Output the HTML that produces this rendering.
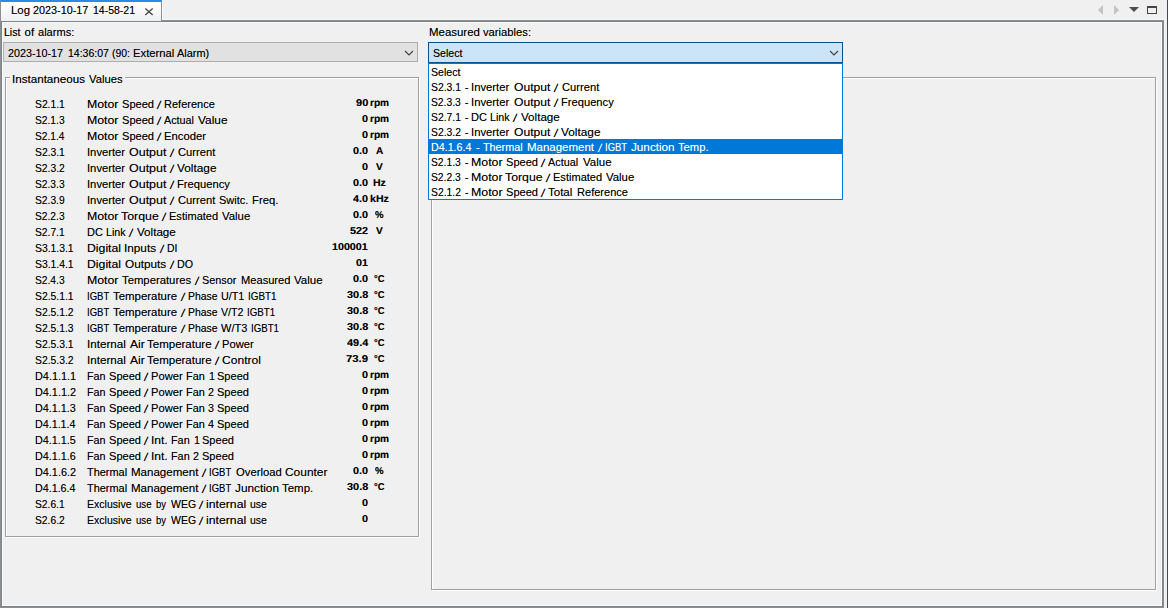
<!DOCTYPE html>
<html lang="en">
<head>
<meta charset="utf-8">
<title>Log 2023-10-17 14-58-21</title>
<style>
html,body{margin:0;padding:0}
body{width:1168px;height:608px;background:#f0f0f0;position:relative;overflow:hidden;font-family:"Liberation Sans",sans-serif;font-size:11.5px;color:#000}
div,span,svg{position:absolute;box-sizing:border-box}
.t{text-shadow:0 0 0 rgba(0,0,0,.45);white-space:nowrap;line-height:16px;height:16px;transform-origin:0 0;font-size:11.5px}
.b{font-weight:bold;font-size:10px;text-rendering:geometricPrecision}
.sl{text-shadow:0 0 0 rgba(0,0,0,.8)}
.w{color:#fff;text-shadow:0 0 0 rgba(255,255,255,.45)}
#edge{left:1167px;top:0;width:1px;height:608px;background:#454a52}
#frame{left:0;top:20px;width:1164px;height:588px;box-shadow:inset 0 0 0 1px #8e8e8e,inset 0 0 0 2px #7d838c,inset 0 0 0 3px #fbfbfb}
#tab{left:0;top:0;width:162px;height:21px;background:linear-gradient(#ffffff,#fafafa 40%,#f0f0f0);border-left:1px solid #8e8e8e;border-right:1px solid #8e8e8e;border-top:2px solid #2b8ae2}
#tabhl{left:162px;top:2px;width:1px;height:18px;background:#fafafa}
#tabhl2{left:162px;top:19px;width:1002px;height:1px;background:#f8f8f8}
#cb1{left:3px;top:42px;width:415px;height:20px;background:#e1e1e1;border:1px solid #adadad}
#cb2{left:428px;top:42px;width:415px;height:21px;background:#cce4f7;border:1px solid #005499}
#dd{left:428px;top:63px;width:415px;height:137px;background:#fff;border:1px solid #0078d7}
#sel{left:429px;top:139px;width:413px;height:15px;background:#0078d7}
.grp{left:0;top:0;width:0;height:0}
.gg{border:1px solid #a0a0a0}
.gw{border:1px solid #fff}
#gbt{left:10px;top:70px;width:115px;height:16px;background:#f0f0f0}
</style>
</head>
<body>
<div id="edge"></div>
<div id="frame"></div>
<div id="tabhl2"></div>
<div id="tab"></div>
<div id="tabhl"></div>
<svg style="left:140px;top:4px" width="18" height="16" viewBox="0 0 18 16"><path d="M5.3 4.4 L12.7 10.9 M12.7 4.4 L5.3 10.9" stroke="#444" stroke-width="1.3" fill="none"/></svg>
<svg style="left:1090px;top:0" width="74" height="20" viewBox="0 0 74 20">
<path d="M8 10 L13 5 L13 15 Z" fill="#c3c3c3"/>
<path d="M24 5 L29 10 L24 15 Z" fill="#c3c3c3"/>
<path d="M39 7 L49 7 L44 12 Z" fill="#4d4d4d"/>
<path d="M57 6 H67 V14 H57 Z M58 8 V13 H66 V8 Z" fill="#454545" fill-rule="evenodd"/>
</svg>
<div id="cb1"></div>
<svg style="left:403px;top:48px" width="12" height="10" viewBox="0 0 12 10"><path d="M2 3 L6 7 L10 3" stroke="#404040" stroke-width="1.1" fill="none"/></svg>
<div class="gw" style="left:6px;top:78px;width:414px;height:460px"></div>
<div class="gg" style="left:5px;top:77px;width:414px;height:460px"></div>
<div id="gbt"></div>
<div class="gw" style="left:432px;top:78px;width:725px;height:513px"></div>
<div class="gg" style="left:431px;top:77px;width:725px;height:513px"></div>
<div id="cb2"></div>
<svg style="left:828px;top:48px" width="12" height="10" viewBox="0 0 12 10"><path d="M2 3 L6 7 L10 3" stroke="#404040" stroke-width="1.1" fill="none"/></svg>
<div id="dd"></div>
<div id="sel"></div>
<div class="grp" id="tabtitle">
<span class="t" style="left:11.26px;top:2.0px;transform:scaleX(0.9903)">Log</span> <span class="t" style="left:33.40px;top:2.0px;transform:scaleX(0.9396)">2023-10-17</span> <span class="t" style="left:93.30px;top:2.0px;transform:scaleX(0.9137)">14-58-21</span>
</div>
<div class="grp" id="lbl-alarms">
<span class="t" style="left:4.04px;top:24.0px;transform:scaleX(0.9169)">List</span> <span class="t" style="left:24.52px;top:24.0px;transform:scaleX(1.0000)">of</span> <span class="t" style="left:37.50px;top:24.0px;transform:scaleX(0.9612)">alarms:</span>
</div>
<div class="grp" id="lbl-vars">
<span class="t" style="left:429.45px;top:24.0px;transform:scaleX(0.9946)">Measured</span> <span class="t" style="left:483.27px;top:24.0px;transform:scaleX(0.9760)">variables:</span>
</div>
<div class="grp" id="cb1-text">
<span class="t" style="left:8.24px;top:45.0px;transform:scaleX(0.9353)">2023-10-17</span> <span class="t" style="left:68.23px;top:45.0px;transform:scaleX(0.9128)">14:36:07</span> <span class="t" style="left:111.93px;top:45.0px;transform:scaleX(0.9026)">(90:</span> <span class="t" style="left:133.34px;top:45.0px;transform:scaleX(0.9806)">External</span> <span class="t" style="left:177.04px;top:45.0px;transform:scaleX(0.9483)">Alarm)</span>
</div>
<div class="grp" id="cb2-text">
<span class="t" style="left:433.14px;top:45.0px;transform:scaleX(0.9228)">Select</span>
</div>
<div class="grp" id="legend">
<span class="t" style="left:11.79px;top:71.0px;transform:scaleX(1.0098)">Instantaneous</span> <span class="t" style="left:89.18px;top:71.0px;transform:scaleX(0.9767)">Values</span>
</div>
<div class="grp" id="options">
<div class="grp opt">
<span class="t" style="left:431.34px;top:64.0px;transform:scaleX(0.9230)">Select</span>
</div>
<div class="grp opt">
<span class="t" style="left:431.13px;top:79.0px;transform:scaleX(0.9003)">S2.3.1</span> <span class="t" style="left:464.68px;top:79.0px;transform:scaleX(1.0000)">-</span> <span class="t" style="left:470.98px;top:79.0px;transform:scaleX(0.9782)">Inverter</span> <span class="t" style="left:513.88px;top:79.0px;transform:scaleX(1.0533)">Output</span> <span class="t sl" style="left:553.85px;top:79.6px;transform-origin:0 11px;transform:skewX(-9.5deg)">/</span> <span class="t" style="left:562.04px;top:79.0px;transform:scaleX(0.9732)">Current</span>
</div>
<div class="grp opt">
<span class="t" style="left:431.22px;top:94.0px;transform:scaleX(0.8951)">S2.3.3</span> <span class="t" style="left:464.68px;top:94.0px;transform:scaleX(1.0000)">-</span> <span class="t" style="left:470.98px;top:94.0px;transform:scaleX(0.9782)">Inverter</span> <span class="t" style="left:513.88px;top:94.0px;transform:scaleX(1.0533)">Output</span> <span class="t sl" style="left:553.85px;top:94.6px;transform-origin:0 11px;transform:skewX(-9.5deg)">/</span> <span class="t" style="left:561.32px;top:94.0px;transform:scaleX(0.9700)">Frequency</span>
</div>
<div class="grp opt">
<span class="t" style="left:431.14px;top:109.0px;transform:scaleX(0.8989)">S2.7.1</span> <span class="t" style="left:464.68px;top:109.0px;transform:scaleX(1.0000)">-</span> <span class="t" style="left:471.43px;top:109.0px;transform:scaleX(0.9598)">DC</span> <span class="t" style="left:490.35px;top:109.0px;transform:scaleX(0.9302)">Link</span> <span class="t sl" style="left:513.30px;top:109.6px;transform-origin:0 11px;transform:skewX(-9.5deg)">/</span> <span class="t" style="left:520.83px;top:109.0px;transform:scaleX(1.0111)">Voltage</span>
</div>
<div class="grp opt">
<span class="t" style="left:431.14px;top:124.0px;transform:scaleX(0.9005)">S2.3.2</span> <span class="t" style="left:464.68px;top:124.0px;transform:scaleX(1.0000)">-</span> <span class="t" style="left:470.98px;top:124.0px;transform:scaleX(0.9782)">Inverter</span> <span class="t" style="left:513.88px;top:124.0px;transform:scaleX(1.0533)">Output</span> <span class="t sl" style="left:553.85px;top:124.6px;transform-origin:0 11px;transform:skewX(-9.5deg)">/</span> <span class="t" style="left:561.40px;top:124.0px;transform:scaleX(1.0297)">Voltage</span>
</div>
<div class="grp opt">
<span class="t w" style="left:431.29px;top:139.0px;transform:scaleX(0.9297)">D4.1.6.4</span> <span class="t w" style="left:476.07px;top:139.0px;transform:scaleX(1.0000)">-</span> <span class="t w" style="left:482.66px;top:139.0px;transform:scaleX(0.9381)">Thermal</span> <span class="t w" style="left:526.86px;top:139.0px;transform:scaleX(0.9988)">Management</span> <span class="t sl w" style="left:597.95px;top:139.6px;transform-origin:0 11px;transform:skewX(-9.5deg)">/</span> <span class="t w" style="left:604.84px;top:139.0px;transform:scaleX(0.8244)">IGBT</span> <span class="t w" style="left:630.89px;top:139.0px;transform:scaleX(1.0180)">Junction</span> <span class="t w" style="left:677.70px;top:139.0px;transform:scaleX(0.9736)">Temp.</span>
</div>
<div class="grp opt">
<span class="t" style="left:431.22px;top:154.0px;transform:scaleX(0.8946)">S2.1.3</span> <span class="t" style="left:464.68px;top:154.0px;transform:scaleX(1.0000)">-</span> <span class="t" style="left:471.45px;top:154.0px;transform:scaleX(1.0751)">Motor</span> <span class="t" style="left:506.32px;top:154.0px;transform:scaleX(0.9626)">Speed</span> <span class="t sl" style="left:541.15px;top:154.6px;transform-origin:0 11px;transform:skewX(-9.5deg)">/</span> <span class="t" style="left:548.37px;top:154.0px;transform:scaleX(0.9425)">Actual</span> <span class="t" style="left:583.27px;top:154.0px;transform:scaleX(0.9999)">Value</span>
</div>
<div class="grp opt">
<span class="t" style="left:431.22px;top:169.0px;transform:scaleX(0.8946)">S2.2.3</span> <span class="t" style="left:464.68px;top:169.0px;transform:scaleX(1.0000)">-</span> <span class="t" style="left:471.45px;top:169.0px;transform:scaleX(1.0751)">Motor</span> <span class="t" style="left:505.40px;top:169.0px;transform:scaleX(1.0700)">Torque</span> <span class="t sl" style="left:546.30px;top:169.6px;transform-origin:0 11px;transform:skewX(-9.5deg)">/</span> <span class="t" style="left:553.29px;top:169.0px;transform:scaleX(0.9611)">Estimated</span> <span class="t" style="left:606.44px;top:169.0px;transform:scaleX(0.9902)">Value</span>
</div>
<div class="grp opt">
<span class="t" style="left:431.15px;top:184.0px;transform:scaleX(0.8994)">S2.1.2</span> <span class="t" style="left:464.68px;top:184.0px;transform:scaleX(1.0000)">-</span> <span class="t" style="left:471.45px;top:184.0px;transform:scaleX(1.0751)">Motor</span> <span class="t" style="left:506.32px;top:184.0px;transform:scaleX(0.9626)">Speed</span> <span class="t sl" style="left:541.15px;top:184.6px;transform-origin:0 11px;transform:skewX(-9.5deg)">/</span> <span class="t" style="left:547.78px;top:184.0px;transform:scaleX(1.0021)">Total</span> <span class="t" style="left:577.09px;top:184.0px;transform:scaleX(0.9611)">Reference</span>
</div>
</div>
<div class="grp" id="values">
<div class="grp row">
<div class="grp code"><span class="t" style="left:35.03px;top:96.0px;transform:scaleX(0.8973)">S2.1.1</span></div>
<div class="grp name"><span class="t" style="left:86.59px;top:96.0px;transform:scaleX(1.0705)">Motor</span> <span class="t" style="left:122.10px;top:96.0px;transform:scaleX(0.9626)">Speed</span> <span class="t sl" style="left:157.05px;top:96.6px;transform-origin:0 11px;transform:skewX(-9.5deg)">/</span> <span class="t" style="left:164.14px;top:96.0px;transform:scaleX(0.9575)">Reference</span></div>
<div class="grp val"><span class="t b" style="left:356.10px;top:95.5px;transform:scaleX(1.1037)">90</span></div>
<div class="grp unit"><span class="t b" style="left:369.88px;top:95.5px;transform:scaleX(1.0097)">rpm</span></div>
</div>
<div class="grp row">
<div class="grp code"><span class="t" style="left:35.02px;top:112.0px;transform:scaleX(0.8897)">S2.1.3</span></div>
<div class="grp name"><span class="t" style="left:86.59px;top:112.0px;transform:scaleX(1.0705)">Motor</span> <span class="t" style="left:122.10px;top:112.0px;transform:scaleX(0.9626)">Speed</span> <span class="t sl" style="left:157.05px;top:112.6px;transform-origin:0 11px;transform:skewX(-9.5deg)">/</span> <span class="t" style="left:164.10px;top:112.0px;transform:scaleX(0.9393)">Actual</span> <span class="t" style="left:198.40px;top:112.0px;transform:scaleX(1.0333)">Value</span></div>
<div class="grp val"><span class="t b" style="left:362.38px;top:111.5px;transform:scaleX(1.0777)">0</span></div>
<div class="grp unit"><span class="t b" style="left:369.88px;top:111.5px;transform:scaleX(1.0097)">rpm</span></div>
</div>
<div class="grp row">
<div class="grp code"><span class="t" style="left:35.29px;top:128.0px;transform:scaleX(0.8856)">S2.1.4</span></div>
<div class="grp name"><span class="t" style="left:86.59px;top:128.0px;transform:scaleX(1.0705)">Motor</span> <span class="t" style="left:122.10px;top:128.0px;transform:scaleX(0.9626)">Speed</span> <span class="t sl" style="left:157.05px;top:128.6px;transform-origin:0 11px;transform:skewX(-9.5deg)">/</span> <span class="t" style="left:164.21px;top:128.0px;transform:scaleX(0.9781)">Encoder</span></div>
<div class="grp val"><span class="t b" style="left:362.38px;top:127.5px;transform:scaleX(1.0777)">0</span></div>
<div class="grp unit"><span class="t b" style="left:369.88px;top:127.5px;transform:scaleX(1.0097)">rpm</span></div>
</div>
<div class="grp row">
<div class="grp code"><span class="t" style="left:35.03px;top:144.0px;transform:scaleX(0.8981)">S2.3.1</span></div>
<div class="grp name"><span class="t" style="left:86.82px;top:144.0px;transform:scaleX(0.9775)">Inverter</span> <span class="t" style="left:128.72px;top:144.0px;transform:scaleX(1.0849)">Output</span> <span class="t sl" style="left:170.45px;top:144.6px;transform-origin:0 11px;transform:skewX(-9.5deg)">/</span> <span class="t" style="left:177.88px;top:144.0px;transform:scaleX(0.9732)">Current</span></div>
<div class="grp val"><span class="t b" style="left:353.38px;top:143.5px;transform:scaleX(1.0778)">0.0</span></div>
<div class="grp unit"><span class="t b" style="left:375.97px;top:143.5px;transform:scaleX(1.0065)">A</span></div>
</div>
<div class="grp row">
<div class="grp code"><span class="t" style="left:35.06px;top:160.0px;transform:scaleX(0.8946)">S2.3.2</span></div>
<div class="grp name"><span class="t" style="left:86.82px;top:160.0px;transform:scaleX(0.9775)">Inverter</span> <span class="t" style="left:128.72px;top:160.0px;transform:scaleX(1.0849)">Output</span> <span class="t sl" style="left:170.45px;top:160.6px;transform-origin:0 11px;transform:skewX(-9.5deg)">/</span> <span class="t" style="left:177.30px;top:160.0px;transform:scaleX(1.0297)">Voltage</span></div>
<div class="grp val"><span class="t b" style="left:362.38px;top:159.5px;transform:scaleX(1.0777)">0</span></div>
<div class="grp unit"><span class="t b" style="left:376.38px;top:159.5px;transform:scaleX(1.0086)">V</span></div>
</div>
<div class="grp row">
<div class="grp code"><span class="t" style="left:35.02px;top:176.0px;transform:scaleX(0.8901)">S2.3.3</span></div>
<div class="grp name"><span class="t" style="left:86.82px;top:176.0px;transform:scaleX(0.9775)">Inverter</span> <span class="t" style="left:128.72px;top:176.0px;transform:scaleX(1.0849)">Output</span> <span class="t sl" style="left:170.45px;top:176.6px;transform-origin:0 11px;transform:skewX(-9.5deg)">/</span> <span class="t" style="left:177.24px;top:176.0px;transform:scaleX(0.9724)">Frequency</span></div>
<div class="grp val"><span class="t b" style="left:353.38px;top:175.5px;transform:scaleX(1.0778)">0.0</span></div>
<div class="grp unit"><span class="t b" style="left:373.34px;top:175.5px;transform:scaleX(1.0547)">Hz</span></div>
</div>
<div class="grp row">
<div class="grp code"><span class="t" style="left:35.04px;top:192.0px;transform:scaleX(0.8914)">S2.3.9</span></div>
<div class="grp name"><span class="t" style="left:86.82px;top:192.0px;transform:scaleX(0.9775)">Inverter</span> <span class="t" style="left:128.72px;top:192.0px;transform:scaleX(1.0849)">Output</span> <span class="t sl" style="left:170.45px;top:192.6px;transform-origin:0 11px;transform:skewX(-9.5deg)">/</span> <span class="t" style="left:177.88px;top:192.0px;transform:scaleX(0.9732)">Current</span> <span class="t" style="left:219.07px;top:192.0px;transform:scaleX(0.9577)">Switc.</span> <span class="t" style="left:252.07px;top:192.0px;transform:scaleX(0.9796)">Freq.</span></div>
<div class="grp val"><span class="t b" style="left:353.38px;top:191.5px;transform:scaleX(1.0778)">4.0</span></div>
<div class="grp unit"><span class="t b" style="left:370.07px;top:191.5px;transform:scaleX(1.0607)">kHz</span></div>
</div>
<div class="grp row">
<div class="grp code"><span class="t" style="left:35.02px;top:208.0px;transform:scaleX(0.8897)">S2.2.3</span></div>
<div class="grp name"><span class="t" style="left:86.59px;top:208.0px;transform:scaleX(1.0705)">Motor</span> <span class="t" style="left:121.30px;top:208.0px;transform:scaleX(1.0735)">Torque</span> <span class="t sl" style="left:162.20px;top:208.6px;transform-origin:0 11px;transform:skewX(-9.5deg)">/</span> <span class="t" style="left:169.02px;top:208.0px;transform:scaleX(0.9610)">Estimated</span> <span class="t" style="left:222.46px;top:208.0px;transform:scaleX(0.9901)">Value</span></div>
<div class="grp val"><span class="t b" style="left:353.38px;top:207.5px;transform:scaleX(1.0778)">0.0</span></div>
<div class="grp unit"><span class="t b" style="left:375.08px;top:207.5px;transform:scaleX(0.9616)">%</span></div>
</div>
<div class="grp row">
<div class="grp code"><span class="t" style="left:35.06px;top:224.0px;transform:scaleX(0.8917)">S2.7.1</span></div>
<div class="grp name"><span class="t" style="left:87.49px;top:224.0px;transform:scaleX(0.9567)">DC</span> <span class="t" style="left:106.19px;top:224.0px;transform:scaleX(0.9302)">Link</span> <span class="t sl" style="left:129.20px;top:224.6px;transform-origin:0 11px;transform:skewX(-9.5deg)">/</span> <span class="t" style="left:136.55px;top:224.0px;transform:scaleX(1.0110)">Voltage</span></div>
<div class="grp val"><span class="t b" style="left:350.40px;top:223.5px;transform:scaleX(1.0805)">522</span></div>
<div class="grp unit"><span class="t b" style="left:376.38px;top:223.5px;transform:scaleX(1.0086)">V</span></div>
</div>
<div class="grp row">
<div class="grp code"><span class="t" style="left:35.06px;top:240.0px;transform:scaleX(0.9019)">S3.1.3.1</span></div>
<div class="grp name"><span class="t" style="left:87.19px;top:240.0px;transform:scaleX(1.0653)">Digital</span> <span class="t" style="left:123.68px;top:240.0px;transform:scaleX(1.0236)">Inputs</span> <span class="t sl" style="left:160.20px;top:240.6px;transform-origin:0 11px;transform:skewX(-9.5deg)">/</span> <span class="t" style="left:167.38px;top:240.0px;transform:scaleX(0.9056)">DI</span></div>
<div class="grp val"><span class="t b" style="left:332.43px;top:239.5px;transform:scaleX(1.0701)">100001</span></div>
</div>
<div class="grp row">
<div class="grp code"><span class="t" style="left:34.95px;top:256.0px;transform:scaleX(0.9019)">S3.1.4.1</span></div>
<div class="grp name"><span class="t" style="left:87.19px;top:256.0px;transform:scaleX(1.0653)">Digital</span> <span class="t" style="left:124.60px;top:256.0px;transform:scaleX(1.0241)">Outputs</span> <span class="t sl" style="left:170.35px;top:256.6px;transform-origin:0 11px;transform:skewX(-9.5deg)">/</span> <span class="t" style="left:177.42px;top:256.0px;transform:scaleX(0.9315)">DO</span></div>
<div class="grp val"><span class="t b" style="left:356.33px;top:255.5px;transform:scaleX(1.0693)">01</span></div>
</div>
<div class="grp row">
<div class="grp code"><span class="t" style="left:35.01px;top:272.0px;transform:scaleX(0.8906)">S2.4.3</span></div>
<div class="grp name"><span class="t" style="left:86.59px;top:272.0px;transform:scaleX(1.0705)">Motor</span> <span class="t" style="left:122.19px;top:272.0px;transform:scaleX(0.9825)">Temperatures</span> <span class="t sl" style="left:195.20px;top:272.6px;transform-origin:0 11px;transform:skewX(-9.5deg)">/</span> <span class="t" style="left:202.28px;top:272.0px;transform:scaleX(0.9415)">Sensor</span> <span class="t" style="left:241.17px;top:272.0px;transform:scaleX(0.9668)">Measured</span> <span class="t" style="left:294.30px;top:272.0px;transform:scaleX(1.0013)">Value</span></div>
<div class="grp val"><span class="t b" style="left:353.38px;top:271.5px;transform:scaleX(1.0778)">0.0</span></div>
<div class="grp unit"><span class="t b" style="left:373.70px;top:271.5px;transform:scaleX(0.9364)">°C</span></div>
</div>
<div class="grp row">
<div class="grp code"><span class="t" style="left:35.06px;top:288.0px;transform:scaleX(0.9017)">S2.5.1.1</span></div>
<div class="grp name"><span class="t" style="left:87.07px;top:288.0px;transform:scaleX(0.8291)">IGBT</span> <span class="t" style="left:113.30px;top:288.0px;transform:scaleX(0.9928)">Temperature</span> <span class="t sl" style="left:180.90px;top:288.6px;transform-origin:0 11px;transform:skewX(-9.5deg)">/</span> <span class="t" style="left:188.08px;top:288.0px;transform:scaleX(0.9043)">Phase</span> <span class="t" style="left:221.48px;top:288.0px;transform:scaleX(0.9370)">U/T1</span> <span class="t" style="left:247.74px;top:288.0px;transform:scaleX(0.8607)">IGBT1</span></div>
<div class="grp val"><span class="t b" style="left:347.09px;top:287.5px;transform:scaleX(1.0918)">30.8</span></div>
<div class="grp unit"><span class="t b" style="left:373.70px;top:287.5px;transform:scaleX(0.9364)">°C</span></div>
</div>
<div class="grp row">
<div class="grp code"><span class="t" style="left:35.12px;top:304.0px;transform:scaleX(0.9003)">S2.5.1.2</span></div>
<div class="grp name"><span class="t" style="left:87.07px;top:304.0px;transform:scaleX(0.8291)">IGBT</span> <span class="t" style="left:113.30px;top:304.0px;transform:scaleX(0.9928)">Temperature</span> <span class="t sl" style="left:180.90px;top:304.6px;transform-origin:0 11px;transform:skewX(-9.5deg)">/</span> <span class="t" style="left:188.08px;top:304.0px;transform:scaleX(0.9043)">Phase</span> <span class="t" style="left:221.22px;top:304.0px;transform:scaleX(0.9254)">V/T2</span> <span class="t" style="left:246.95px;top:304.0px;transform:scaleX(0.8481)">IGBT1</span></div>
<div class="grp val"><span class="t b" style="left:347.09px;top:303.5px;transform:scaleX(1.0918)">30.8</span></div>
<div class="grp unit"><span class="t b" style="left:373.70px;top:303.5px;transform:scaleX(0.9364)">°C</span></div>
</div>
<div class="grp row">
<div class="grp code"><span class="t" style="left:34.97px;top:320.0px;transform:scaleX(0.8989)">S2.5.1.3</span></div>
<div class="grp name"><span class="t" style="left:87.07px;top:320.0px;transform:scaleX(0.8291)">IGBT</span> <span class="t" style="left:113.30px;top:320.0px;transform:scaleX(0.9928)">Temperature</span> <span class="t sl" style="left:180.90px;top:320.6px;transform-origin:0 11px;transform:skewX(-9.5deg)">/</span> <span class="t" style="left:188.08px;top:320.0px;transform:scaleX(0.9043)">Phase</span> <span class="t" style="left:221.12px;top:320.0px;transform:scaleX(0.9575)">W/T3</span> <span class="t" style="left:250.75px;top:320.0px;transform:scaleX(0.8422)">IGBT1</span></div>
<div class="grp val"><span class="t b" style="left:347.09px;top:319.5px;transform:scaleX(1.0918)">30.8</span></div>
<div class="grp unit"><span class="t b" style="left:373.70px;top:319.5px;transform:scaleX(0.9364)">°C</span></div>
</div>
<div class="grp row">
<div class="grp code"><span class="t" style="left:35.06px;top:336.0px;transform:scaleX(0.9019)">S2.5.3.1</span></div>
<div class="grp name"><span class="t" style="left:86.72px;top:336.0px;transform:scaleX(1.0150)">Internal</span> <span class="t" style="left:130.13px;top:336.0px;transform:scaleX(1.0450)">Air</span> <span class="t" style="left:147.40px;top:336.0px;transform:scaleX(1.0006)">Temperature</span> <span class="t sl" style="left:215.00px;top:336.6px;transform-origin:0 11px;transform:skewX(-9.5deg)">/</span> <span class="t" style="left:222.18px;top:336.0px;transform:scaleX(0.9732)">Power</span></div>
<div class="grp val"><span class="t b" style="left:347.08px;top:335.5px;transform:scaleX(1.0905)">49.4</span></div>
<div class="grp unit"><span class="t b" style="left:373.70px;top:335.5px;transform:scaleX(0.9364)">°C</span></div>
</div>
<div class="grp row">
<div class="grp code"><span class="t" style="left:35.12px;top:352.0px;transform:scaleX(0.9003)">S2.5.3.2</span></div>
<div class="grp name"><span class="t" style="left:86.72px;top:352.0px;transform:scaleX(1.0150)">Internal</span> <span class="t" style="left:130.13px;top:352.0px;transform:scaleX(1.0450)">Air</span> <span class="t" style="left:147.40px;top:352.0px;transform:scaleX(1.0006)">Temperature</span> <span class="t sl" style="left:215.00px;top:352.6px;transform-origin:0 11px;transform:skewX(-9.5deg)">/</span> <span class="t" style="left:222.31px;top:352.0px;transform:scaleX(1.0497)">Control</span></div>
<div class="grp val"><span class="t b" style="left:346.39px;top:351.5px;transform:scaleX(1.1298)">73.9</span></div>
<div class="grp unit"><span class="t b" style="left:373.70px;top:351.5px;transform:scaleX(0.9364)">°C</span></div>
</div>
<div class="grp row">
<div class="grp code"><span class="t" style="left:34.90px;top:368.0px;transform:scaleX(0.9450)">D4.1.1.1</span></div>
<div class="grp name"><span class="t" style="left:87.19px;top:368.0px;transform:scaleX(0.9349)">Fan</span> <span class="t" style="left:109.38px;top:368.0px;transform:scaleX(0.9615)">Speed</span> <span class="t sl" style="left:144.35px;top:368.6px;transform-origin:0 11px;transform:skewX(-9.5deg)">/</span> <span class="t" style="left:151.09px;top:368.0px;transform:scaleX(0.9725)">Power</span> <span class="t" style="left:186.10px;top:368.0px;transform:scaleX(0.9478)">Fan</span> <span class="t" style="left:209.08px;top:368.0px;transform:scaleX(0.9300)">1</span> <span class="t" style="left:217.40px;top:368.0px;transform:scaleX(0.9611)">Speed</span></div>
<div class="grp val"><span class="t b" style="left:362.38px;top:367.5px;transform:scaleX(1.0777)">0</span></div>
<div class="grp unit"><span class="t b" style="left:369.88px;top:367.5px;transform:scaleX(1.0097)">rpm</span></div>
</div>
<div class="grp row">
<div class="grp code"><span class="t" style="left:34.58px;top:384.0px;transform:scaleX(0.9424)">D4.1.1.2</span></div>
<div class="grp name"><span class="t" style="left:87.19px;top:384.0px;transform:scaleX(0.9349)">Fan</span> <span class="t" style="left:109.38px;top:384.0px;transform:scaleX(0.9615)">Speed</span> <span class="t sl" style="left:144.35px;top:384.6px;transform-origin:0 11px;transform:skewX(-9.5deg)">/</span> <span class="t" style="left:151.09px;top:384.0px;transform:scaleX(0.9725)">Power</span> <span class="t" style="left:186.10px;top:384.0px;transform:scaleX(0.9478)">Fan</span> <span class="t" style="left:208.18px;top:384.0px;transform:scaleX(0.9300)">2</span> <span class="t" style="left:217.40px;top:384.0px;transform:scaleX(0.9611)">Speed</span></div>
<div class="grp val"><span class="t b" style="left:362.38px;top:383.5px;transform:scaleX(1.0777)">0</span></div>
<div class="grp unit"><span class="t b" style="left:369.88px;top:383.5px;transform:scaleX(1.0097)">rpm</span></div>
</div>
<div class="grp row">
<div class="grp code"><span class="t" style="left:34.90px;top:400.0px;transform:scaleX(0.9387)">D4.1.1.3</span></div>
<div class="grp name"><span class="t" style="left:87.19px;top:400.0px;transform:scaleX(0.9349)">Fan</span> <span class="t" style="left:109.38px;top:400.0px;transform:scaleX(0.9615)">Speed</span> <span class="t sl" style="left:144.35px;top:400.6px;transform-origin:0 11px;transform:skewX(-9.5deg)">/</span> <span class="t" style="left:151.09px;top:400.0px;transform:scaleX(0.9725)">Power</span> <span class="t" style="left:186.10px;top:400.0px;transform:scaleX(0.9478)">Fan</span> <span class="t" style="left:208.09px;top:400.0px;transform:scaleX(0.9300)">3</span> <span class="t" style="left:217.40px;top:400.0px;transform:scaleX(0.9611)">Speed</span></div>
<div class="grp val"><span class="t b" style="left:362.38px;top:399.5px;transform:scaleX(1.0777)">0</span></div>
<div class="grp unit"><span class="t b" style="left:369.88px;top:399.5px;transform:scaleX(1.0097)">rpm</span></div>
</div>
<div class="grp row">
<div class="grp code"><span class="t" style="left:35.22px;top:416.0px;transform:scaleX(0.9322)">D4.1.1.4</span></div>
<div class="grp name"><span class="t" style="left:87.19px;top:416.0px;transform:scaleX(0.9349)">Fan</span> <span class="t" style="left:109.38px;top:416.0px;transform:scaleX(0.9615)">Speed</span> <span class="t sl" style="left:144.35px;top:416.6px;transform-origin:0 11px;transform:skewX(-9.5deg)">/</span> <span class="t" style="left:151.09px;top:416.0px;transform:scaleX(0.9725)">Power</span> <span class="t" style="left:186.10px;top:416.0px;transform:scaleX(0.9478)">Fan</span> <span class="t" style="left:208.15px;top:416.0px;transform:scaleX(0.9300)">4</span> <span class="t" style="left:217.40px;top:416.0px;transform:scaleX(0.9611)">Speed</span></div>
<div class="grp val"><span class="t b" style="left:362.38px;top:415.5px;transform:scaleX(1.0777)">0</span></div>
<div class="grp unit"><span class="t b" style="left:369.88px;top:415.5px;transform:scaleX(1.0097)">rpm</span></div>
</div>
<div class="grp row">
<div class="grp code"><span class="t" style="left:34.90px;top:432.0px;transform:scaleX(0.9387)">D4.1.1.5</span></div>
<div class="grp name"><span class="t" style="left:87.19px;top:432.0px;transform:scaleX(0.9349)">Fan</span> <span class="t" style="left:109.38px;top:432.0px;transform:scaleX(0.9615)">Speed</span> <span class="t sl" style="left:144.35px;top:432.6px;transform-origin:0 11px;transform:skewX(-9.5deg)">/</span> <span class="t" style="left:150.91px;top:432.0px;transform:scaleX(1.0454)">Int.</span> <span class="t" style="left:171.15px;top:432.0px;transform:scaleX(0.9408)">Fan</span> <span class="t" style="left:193.98px;top:432.0px;transform:scaleX(0.9300)">1</span> <span class="t" style="left:202.43px;top:432.0px;transform:scaleX(0.9614)">Speed</span></div>
<div class="grp val"><span class="t b" style="left:362.38px;top:431.5px;transform:scaleX(1.0777)">0</span></div>
<div class="grp unit"><span class="t b" style="left:369.88px;top:431.5px;transform:scaleX(1.0097)">rpm</span></div>
</div>
<div class="grp row">
<div class="grp code"><span class="t" style="left:34.90px;top:448.0px;transform:scaleX(0.9387)">D4.1.1.6</span></div>
<div class="grp name"><span class="t" style="left:87.19px;top:448.0px;transform:scaleX(0.9349)">Fan</span> <span class="t" style="left:109.38px;top:448.0px;transform:scaleX(0.9615)">Speed</span> <span class="t sl" style="left:144.35px;top:448.6px;transform-origin:0 11px;transform:skewX(-9.5deg)">/</span> <span class="t" style="left:150.91px;top:448.0px;transform:scaleX(1.0454)">Int.</span> <span class="t" style="left:171.15px;top:448.0px;transform:scaleX(0.9408)">Fan</span> <span class="t" style="left:193.23px;top:448.0px;transform:scaleX(0.9300)">2</span> <span class="t" style="left:202.43px;top:448.0px;transform:scaleX(0.9614)">Speed</span></div>
<div class="grp val"><span class="t b" style="left:362.38px;top:447.5px;transform:scaleX(1.0777)">0</span></div>
<div class="grp unit"><span class="t b" style="left:369.88px;top:447.5px;transform:scaleX(1.0097)">rpm</span></div>
</div>
<div class="grp row">
<div class="grp code"><span class="t" style="left:34.58px;top:464.0px;transform:scaleX(0.9424)">D4.1.6.2</span></div>
<div class="grp name"><span class="t" style="left:87.49px;top:464.0px;transform:scaleX(0.9500)">Thermal</span> <span class="t" style="left:131.46px;top:464.0px;transform:scaleX(1.0036)">Management</span> <span class="t sl" style="left:202.35px;top:464.6px;transform-origin:0 11px;transform:skewX(-9.5deg)">/</span> <span class="t" style="left:208.99px;top:464.0px;transform:scaleX(0.8273)">IGBT</span> <span class="t" style="left:235.60px;top:464.0px;transform:scaleX(0.9813)">Overload</span> <span class="t" style="left:284.50px;top:464.0px;transform:scaleX(1.0379)">Counter</span></div>
<div class="grp val"><span class="t b" style="left:353.38px;top:463.5px;transform:scaleX(1.0778)">0.0</span></div>
<div class="grp unit"><span class="t b" style="left:375.08px;top:463.5px;transform:scaleX(0.9616)">%</span></div>
</div>
<div class="grp row">
<div class="grp code"><span class="t" style="left:35.22px;top:480.0px;transform:scaleX(0.9322)">D4.1.6.4</span></div>
<div class="grp name"><span class="t" style="left:87.49px;top:480.0px;transform:scaleX(0.9500)">Thermal</span> <span class="t" style="left:131.46px;top:480.0px;transform:scaleX(1.0036)">Management</span> <span class="t sl" style="left:202.35px;top:480.6px;transform-origin:0 11px;transform:skewX(-9.5deg)">/</span> <span class="t" style="left:208.99px;top:480.0px;transform:scaleX(0.8273)">IGBT</span> <span class="t" style="left:235.10px;top:480.0px;transform:scaleX(1.0259)">Junction</span> <span class="t" style="left:282.16px;top:480.0px;transform:scaleX(0.9969)">Temp.</span></div>
<div class="grp val"><span class="t b" style="left:347.09px;top:479.5px;transform:scaleX(1.0918)">30.8</span></div>
<div class="grp unit"><span class="t b" style="left:373.70px;top:479.5px;transform:scaleX(0.9364)">°C</span></div>
</div>
<div class="grp row">
<div class="grp code"><span class="t" style="left:35.06px;top:496.0px;transform:scaleX(0.8917)">S2.6.1</span></div>
<div class="grp name"><span class="t" style="left:87.16px;top:496.0px;transform:scaleX(0.9181)">Exclusive</span> <span class="t" style="left:136.40px;top:496.0px;transform:scaleX(0.8393)">use</span> <span class="t" style="left:155.80px;top:496.0px;transform:scaleX(0.8226)">by</span> <span class="t" style="left:170.73px;top:496.0px;transform:scaleX(0.9113)">WEG</span> <span class="t sl" style="left:198.80px;top:496.6px;transform-origin:0 11px;transform:skewX(-9.5deg)">/</span> <span class="t" style="left:206.40px;top:496.0px;transform:scaleX(1.0654)">internal</span> <span class="t" style="left:250.47px;top:496.0px;transform:scaleX(0.9045)">use</span></div>
<div class="grp val"><span class="t b" style="left:362.38px;top:495.5px;transform:scaleX(1.0777)">0</span></div>
</div>
<div class="grp row">
<div class="grp code"><span class="t" style="left:35.07px;top:512.0px;transform:scaleX(0.8940)">S2.6.2</span></div>
<div class="grp name"><span class="t" style="left:87.16px;top:512.0px;transform:scaleX(0.9181)">Exclusive</span> <span class="t" style="left:136.40px;top:512.0px;transform:scaleX(0.8393)">use</span> <span class="t" style="left:155.80px;top:512.0px;transform:scaleX(0.8226)">by</span> <span class="t" style="left:170.73px;top:512.0px;transform:scaleX(0.9113)">WEG</span> <span class="t sl" style="left:198.80px;top:512.6px;transform-origin:0 11px;transform:skewX(-9.5deg)">/</span> <span class="t" style="left:206.40px;top:512.0px;transform:scaleX(1.0654)">internal</span> <span class="t" style="left:250.47px;top:512.0px;transform:scaleX(0.9045)">use</span></div>
<div class="grp val"><span class="t b" style="left:362.38px;top:511.5px;transform:scaleX(1.0777)">0</span></div>
</div>
</div>
</body>
</html>
